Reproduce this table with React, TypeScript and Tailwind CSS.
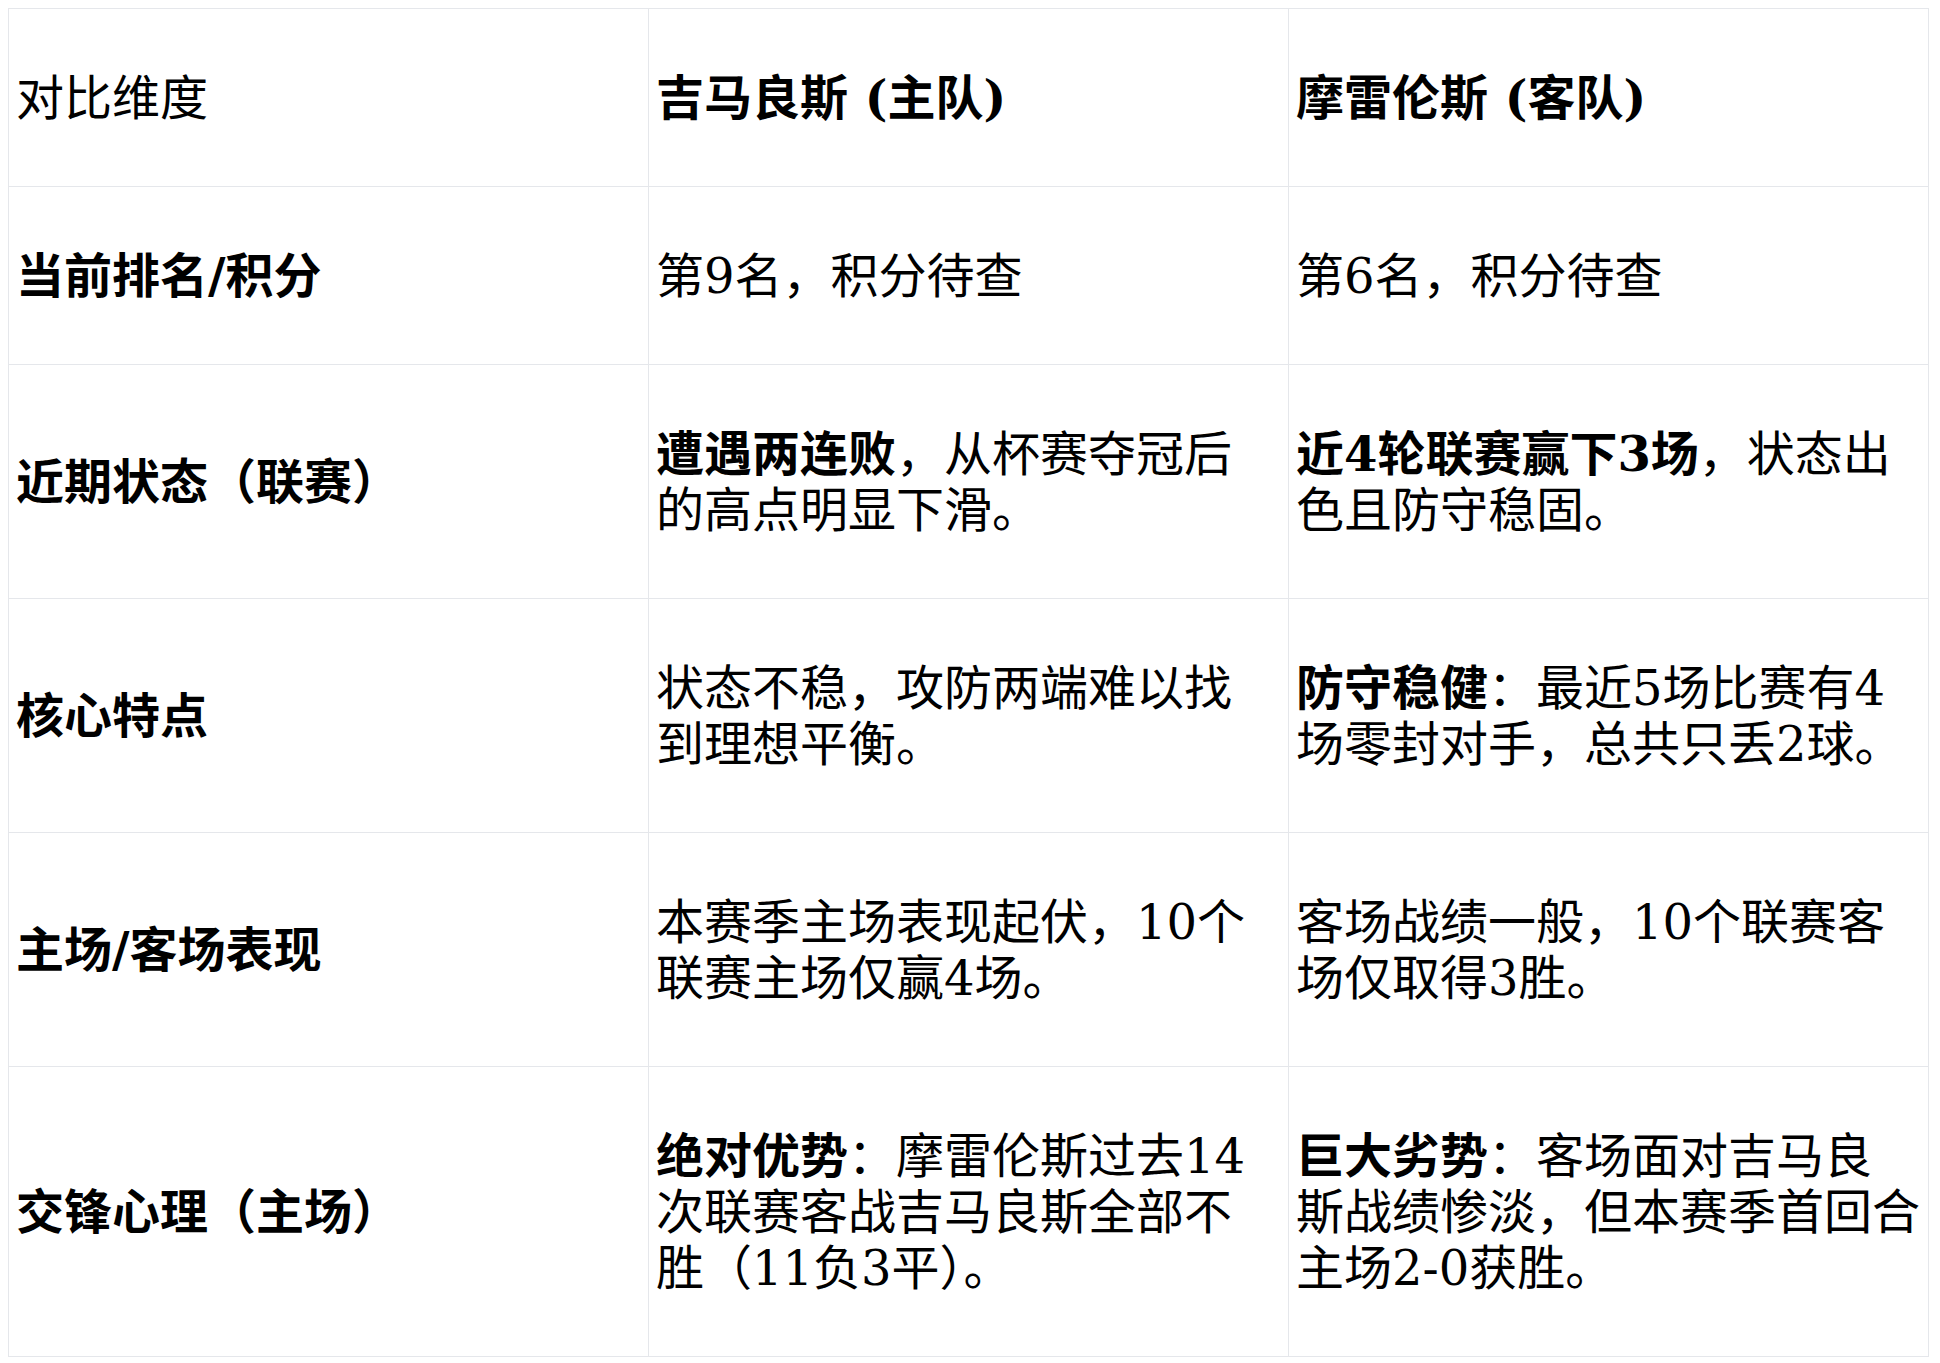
// each cell is a list of lines; a line is a list of [bold, text] pieces
type Piece = [boolean, string];
type Line = Piece[];

type Row = { head: string; home: Line[]; away: Line[] };

const rows: Row[] = [
  {
    head: "当前排名/积分",
    home: [[[false, "第9名，积分待查"]]],
    away: [[[false, "第6名，积分待查"]]],
  },
  {
    head: "近期状态（联赛）",
    home: [
      [
        [true, "遭遇两连败"],
        [false, "，从杯赛夺冠后"],
      ],
      [[false, "的高点明显下滑。"]],
    ],
    away: [
      [
        [true, "近4轮联赛赢下3场"],
        [false, "，状态出"],
      ],
      [[false, "色且防守稳固。"]],
    ],
  },
  {
    head: "核心特点",
    home: [[[false, "状态不稳，攻防两端难以找"]], [[false, "到理想平衡。"]]],
    away: [
      [
        [true, "防守稳健"],
        [false, "：最近5场比赛有4"],
      ],
      [[false, "场零封对手，总共只丢2球。"]],
    ],
  },
  {
    head: "主场/客场表现",
    home: [[[false, "本赛季主场表现起伏，10个"]], [[false, "联赛主场仅赢4场。"]]],
    away: [[[false, "客场战绩一般，10个联赛客"]], [[false, "场仅取得3胜。"]]],
  },
  {
    head: "交锋心理（主场）",
    home: [
      [
        [true, "绝对优势"],
        [false, "：摩雷伦斯过去14"],
      ],
      [[false, "次联赛客战吉马良斯全部不"]],
      [[false, "胜（11负3平）。"]],
    ],
    away: [
      [
        [true, "巨大劣势"],
        [false, "：客场面对吉马良"],
      ],
      [[false, "斯战绩惨淡，但本赛季首回合"]],
      [[false, "主场2-0获胜。"]],
    ],
  },
];

const td = "w-[640px] border border-gray-200 px-[7px] pt-[61px] pb-[60px] align-middle text-left";

function Lines({ lines }: { lines: Line[] }) {
  return (
    <>
      {lines.map((line, i) => (
        <span key={i} className="block whitespace-nowrap">
          {line.map(([bold, text], j) =>
            bold ? (
              <strong key={j} className="font-bold">
                {text}
              </strong>
            ) : (
              <span key={j}>{text}</span>
            )
          )}
        </span>
      ))}
    </>
  );
}

export default function App() {
  return (
    <div className="bg-white p-2 text-black font-['DejaVu_Serif','Noto_Sans_CJK_SC',serif] text-[48px] leading-[56px]">
      <table className="w-[1921px] table-fixed border-collapse">
        <thead>
          <tr>
            <th className={`${td} font-normal`}>对比维度</th>
            <th className={`${td} font-normal`}>
              <strong className="font-bold">吉马良斯 (主队)</strong>
            </th>
            <th className={`${td} font-normal`}>
              <strong className="font-bold">摩雷伦斯 (客队)</strong>
            </th>
          </tr>
        </thead>
        <tbody>
          {rows.map((r) => (
            <tr key={r.head}>
              <td className={td}>
                <strong className="font-bold">{r.head}</strong>
              </td>
              <td className={td}>
                <Lines lines={r.home} />
              </td>
              <td className={td}>
                <Lines lines={r.away} />
              </td>
            </tr>
          ))}
        </tbody>
      </table>
    </div>
  );
}
